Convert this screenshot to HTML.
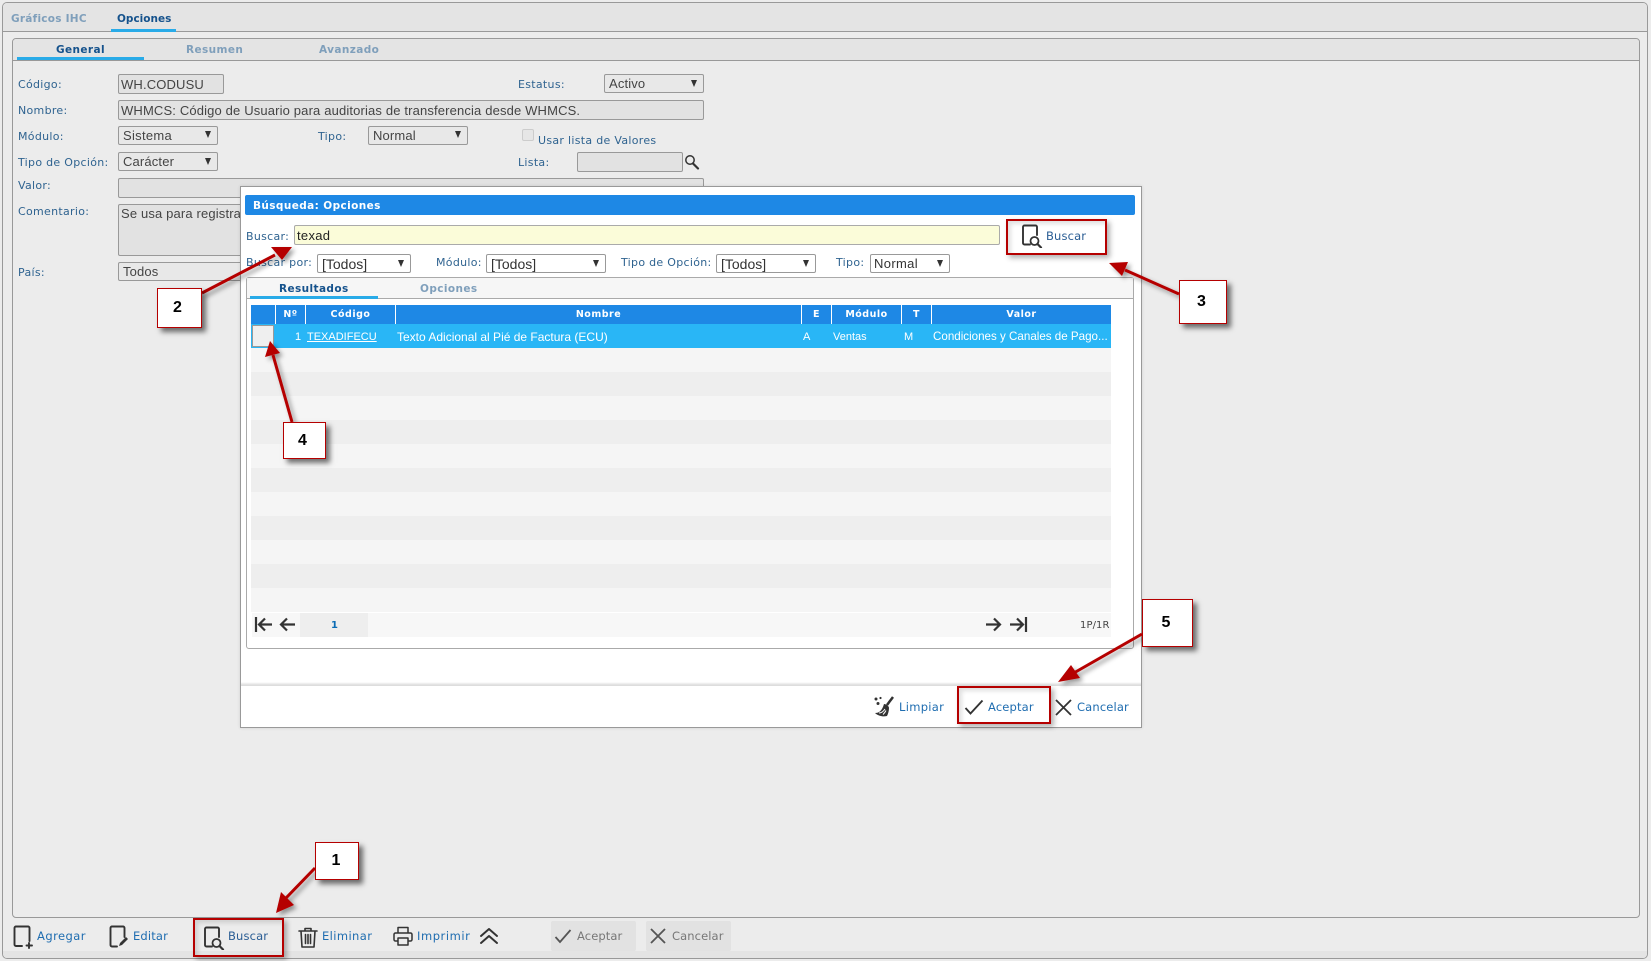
<!DOCTYPE html>
<html lang="es"><head><meta charset="utf-8"><title>Opciones</title>
<style>
html,body{margin:0;padding:0;width:1651px;height:961px;overflow:hidden;background:#ececec}
#r{position:relative;width:1651px;height:961px;overflow:hidden;font-family:"DejaVu Sans",sans-serif;font-size:11px;color:#2f6390}
#r div,#r span.t,#r svg{position:absolute;box-sizing:border-box}
.t{position:absolute;white-space:nowrap;line-height:16px;height:16px;margin-top:1px}
.l{color:#2f6390;font-size:11px;letter-spacing:.3px}
.v{font-family:"Liberation Sans",sans-serif;font-size:13px;color:#444;letter-spacing:.15px}
.vb{font-size:14px;letter-spacing:0}
.b{font-weight:bold;font-size:10.5px;letter-spacing:.4px}
.btn{color:#1f6db0;font-size:11.5px;letter-spacing:.15px;margin-top:0}
.dis{color:#777;font-size:11.5px;letter-spacing:.1px;margin-top:0}
.in{border:1px solid #999;border-radius:2px;background:#e2e2e2}
.sel{border:1px solid #999;border-radius:2px;background:#e8e8e8}
.sel.w{background:#fff}
.ar{width:0;height:0;border-left:3px solid transparent;border-right:3px solid transparent;border-top:7px solid #333}
.red{border:2px solid #b50000;box-shadow:3px 3px 5px rgba(0,0,0,.3),inset 3px 3px 4px rgba(0,0,0,.12)}
.call{background:#fff;border:1px solid #b50000;box-shadow:4px 4px 5px rgba(0,0,0,.55);font:bold 16px "Liberation Sans",sans-serif;color:#000;text-align:center}
.th{top:305px;height:19px;background:#1e88e5;color:#fff;font-weight:bold;font-size:9.5px;line-height:20px;text-align:center;letter-spacing:.5px}
.td{color:#fff;font-family:"Liberation Sans",sans-serif;font-size:11px}
svg .i{fill:none;stroke:#333;stroke-width:1.8;stroke-linecap:round;stroke-linejoin:round}
</style></head><body><div id="r">

<!-- outer panel -->
<div style="left:2px;top:2px;width:1646px;height:957px;border:1px solid #999;border-radius:5px;background:#ececec"></div>
<div style="left:3px;top:3px;width:1644px;height:29px;background:#e4e4e4;border-bottom:1px solid #999;border-radius:4px 4px 0 0"></div>
<div style="left:3px;top:951px;width:1644px;height:7px;background:#e4e4e4;border-radius:0 0 4px 4px"></div>
<span class="t b" style="left:11px;top:10px;color:#7f9fbb;letter-spacing:.25px">Gráficos IHC</span>
<span class="t b" style="left:117px;top:10px;color:#15528c;letter-spacing:0">Opciones</span>
<div style="left:111px;top:29px;width:65px;height:3px;background:#29abe8"></div>

<!-- inner panel -->
<div style="left:12px;top:38px;width:1628px;height:880px;border:1px solid #999;border-radius:4px;background:#ececec"></div>
<div style="left:13px;top:39px;width:1626px;height:22px;background:#e4e4e4;border-bottom:1px solid #999;border-radius:3px 3px 0 0"></div>
<span class="t b" style="left:56px;top:41px;color:#15528c">General</span>
<span class="t b" style="left:186px;top:41px;color:#7f9fbb">Resumen</span>
<span class="t b" style="left:319px;top:41px;color:#7f9fbb">Avanzado</span>
<div style="left:17px;top:57px;width:127px;height:3px;background:#29abe8"></div>

<span class="t l" style="left:18px;top:76px">Código:</span>
<div class="in" style="left:118px;top:74px;width:106px;height:20px"></div>
<span class="t v" style="left:121px;top:76px">WH.CODUSU</span>
<span class="t l" style="left:518px;top:76px">Estatus:</span>
<div class="sel" style="left:604px;top:74px;width:100px;height:19px"></div>
<span class="t v" style="left:609px;top:75px">Activo</span>
<div class="ar" style="left:691px;top:80px"></div>

<span class="t l" style="left:18px;top:102px">Nombre:</span>
<div class="in" style="left:118px;top:100px;width:586px;height:20px"></div>
<span class="t v" style="left:121px;top:102px">WHMCS: Código de Usuario para auditorias de transferencia desde WHMCS.</span>

<span class="t l" style="left:18px;top:128px">Módulo:</span>
<div class="sel" style="left:118px;top:126px;width:100px;height:19px"></div>
<span class="t v" style="left:123px;top:127px;letter-spacing:.3px">Sistema</span>
<div class="ar" style="left:205px;top:131px"></div>
<span class="t l" style="left:318px;top:128px">Tipo:</span>
<div class="sel" style="left:368px;top:126px;width:100px;height:19px"></div>
<span class="t v" style="left:373px;top:127px">Normal</span>
<div class="ar" style="left:455px;top:131px"></div>
<div style="left:522px;top:129px;width:12px;height:12px;border:1px solid #ccc;border-radius:2px;background:#e6e6e6"></div>
<span class="t l" style="left:538px;top:132px">Usar lista de Valores</span>

<span class="t l" style="left:18px;top:154px">Tipo de Opción:</span>
<div class="sel" style="left:118px;top:152px;width:100px;height:19px"></div>
<span class="t v" style="left:123px;top:153px">Carácter</span>
<div class="ar" style="left:205px;top:158px"></div>
<span class="t l" style="left:518px;top:154px">Lista:</span>
<div class="in" style="left:577px;top:152px;width:106px;height:20px"></div>
<svg style="left:684px;top:154px" width="16" height="16" viewBox="0 0 16 16"><circle cx="6" cy="6" r="4.2" class="i" style="stroke-width:1.5"/><path d="M9 9.5l5 5" class="i" style="stroke-width:2.2"/></svg>

<span class="t l" style="left:18px;top:177px">Valor:</span>
<div class="in" style="left:118px;top:178px;width:586px;height:20px"></div>
<span class="t l" style="left:18px;top:203px">Comentario:</span>
<div class="in" style="left:118px;top:204px;width:586px;height:52px"></div>
<span class="t v" style="left:121px;top:205px">Se usa para registrar</span>
<span class="t l" style="left:18px;top:264px">País:</span>
<div class="sel" style="left:118px;top:262px;width:300px;height:19px"></div>
<span class="t v" style="left:123px;top:263px">Todos</span>

<!-- bottom toolbar -->
<svg style="left:13px;top:925px" width="21" height="24" viewBox="0 0 21 24"><path class="i" d="M9 21H3a1.500 1.500 0 0 1-1.500-1.500V3A1.500 1.500 0 0 1 3 1.500h12A1.500 1.500 0 0 1 16.500 3v13M16 18v5M13.500 20.500h5.500" style="stroke-width:1.9"/></svg>
<span class="t btn" style="left:37px;top:928px;letter-spacing:.45px">Agregar</span>
<svg style="left:108px;top:925px" width="22" height="24" viewBox="0 0 22 24"><path class="i" d="M9 21.500H4a1.500 1.500 0 0 1-1.500-1.500V3A1.500 1.500 0 0 1 4 1.500h11A1.500 1.500 0 0 1 16.500 3v9" style="stroke-width:1.9"/><path d="M11 21l1-3 6-6 2 2-6 6z" fill="#333"/></svg>
<span class="t btn" style="left:133px;top:928px">Editar</span>
<div class="red" style="left:193px;top:918px;width:91px;height:39px"></div>
<svg style="left:203px;top:926px" width="22" height="24" viewBox="0 0 22 24"><path class="i" d="M9 20.500H3.500A1.500 1.500 0 0 1 2 19V3A1.500 1.500 0 0 1 3.500 1.500h11A1.500 1.500 0 0 1 16 3v8" style="stroke-width:1.9"/><circle class="i" cx="13.500" cy="17" r="4"/><path class="i" d="M16.500 20l3.500 3.500" style="stroke-width:2.2"/></svg>
<span class="t btn" style="left:228px;top:928px;color:#2a5d94">Buscar</span>
<svg style="left:298px;top:926px" width="20" height="23" viewBox="0 0 20 23"><path class="i" d="M1 5h18M7 5V2.500h6V5M3 5l1 16h12l1-16M7.500 8.500v9M10 8.500v9M12.500 8.500v9" style="stroke-width:1.6"/></svg>
<span class="t btn" style="left:322px;top:928px;letter-spacing:.4px">Eliminar</span>
<svg style="left:393px;top:926px" width="20" height="20" viewBox="0 0 20 20"><path class="i" d="M5 7V1.500h10V7M5 15H2.500A1.500 1.500 0 0 1 1 13.500V8.500A1.500 1.500 0 0 1 2.500 7h15A1.500 1.500 0 0 1 19 8.500v5a1.500 1.500 0 0 1-1.500 1.500H15M5 12h10v7H5z" style="stroke-width:1.5"/></svg>
<span class="t btn" style="left:417px;top:928px;letter-spacing:.55px">Imprimir</span>
<svg style="left:479px;top:927px" width="20" height="18" viewBox="0 0 20 18"><path class="i" d="M2 9l8-7 8 7M2 16l8-7 8 7" style="stroke-width:2"/></svg>
<div style="left:551px;top:921px;width:85px;height:30px;background:#e2e2e2;border-radius:2px"></div>
<svg style="left:554px;top:928px" width="18" height="16" viewBox="0 0 18 16"><path d="M1.500 9l4.500 5L16.500 2" fill="none" stroke="#555" stroke-width="1.800"/></svg>
<span class="t dis" style="left:577px;top:928px">Aceptar</span>
<div style="left:646px;top:921px;width:85px;height:30px;background:#e2e2e2;border-radius:2px"></div>
<svg style="left:650px;top:928px" width="16" height="16" viewBox="0 0 16 16"><path d="M1 1l14 14M15 1L1 15" fill="none" stroke="#555" stroke-width="1.800"/></svg>
<span class="t dis" style="left:672px;top:928px">Cancelar</span>

<!-- dialog -->
<div style="left:240px;top:186px;width:902px;height:542px;background:#fff;border:1px solid #999;box-shadow:0 0 3px rgba(0,0,0,.12)"></div>
<div style="left:245px;top:195px;width:890px;height:20px;background:#1e88e5;border-radius:2px"></div>
<span class="t" style="left:253px;top:197px;color:#fff;font-weight:bold;font-size:10.5px;letter-spacing:.4px">Búsqueda: Opciones</span>

<span class="t l" style="left:246px;top:228px">Buscar:</span>
<div style="left:294px;top:225px;width:706px;height:20px;background:#fbfcd9;border:1px solid #aaa;border-radius:2px"></div>
<span class="t v" style="left:297px;top:227px;color:#222;letter-spacing:.3px">texad</span>
<div class="red" style="left:1006px;top:219px;width:101px;height:36px"></div>
<svg style="left:1021px;top:224px" width="22" height="24" viewBox="0 0 22 24"><path class="i" d="M9 20.500H3.500A1.500 1.500 0 0 1 2 19V3A1.500 1.500 0 0 1 3.500 1.500h11A1.500 1.500 0 0 1 16 3v8" style="stroke-width:1.9"/><circle class="i" cx="13.500" cy="17" r="4"/><path class="i" d="M16.500 20l3.500 3.500" style="stroke-width:2.2"/></svg>
<span class="t btn" style="left:1046px;top:228px;color:#2a5d94">Buscar</span>

<span class="t l" style="left:246px;top:254px">Buscar por:</span>
<div class="sel w" style="left:317px;top:254px;width:94px;height:19px"></div>
<span class="t v vb" style="left:322px;top:255px;color:#333">[Todos]</span>
<div class="ar" style="left:398px;top:260px"></div>
<span class="t l" style="left:436px;top:254px">Módulo:</span>
<div class="sel w" style="left:486px;top:254px;width:120px;height:19px"></div>
<span class="t v vb" style="left:491px;top:255px;color:#333">[Todos]</span>
<div class="ar" style="left:593px;top:260px"></div>
<span class="t l" style="left:621px;top:254px">Tipo de Opción:</span>
<div class="sel w" style="left:716px;top:254px;width:100px;height:19px"></div>
<span class="t v vb" style="left:721px;top:255px;color:#333">[Todos]</span>
<div class="ar" style="left:803px;top:260px"></div>
<span class="t l" style="left:836px;top:254px">Tipo:</span>
<div class="sel w" style="left:870px;top:254px;width:80px;height:19px"></div>
<span class="t v" style="left:874px;top:255px;color:#333;letter-spacing:.35px">Normal</span>
<div class="ar" style="left:937px;top:260px"></div>

<!-- results panel -->
<div style="left:246px;top:277px;width:888px;height:372px;border:1px solid #aaa;border-radius:3px;background:#fff"></div>
<div style="left:247px;top:278px;width:886px;height:21px;background:#f6f6f6;border-bottom:1px solid #aaa"></div>
<span class="t b" style="left:279px;top:280px;color:#15528c">Resultados</span>
<span class="t b" style="left:420px;top:280px;color:#7f9fbb">Opciones</span>
<div style="left:250px;top:296px;width:128px;height:3px;background:#29abe8"></div>

<!-- table -->
<div class="th" style="left:251px;width:24px"></div>
<div class="th" style="left:276px;width:29px">Nº</div>
<div class="th" style="left:306px;width:89px">Código</div>
<div class="th" style="left:396px;width:405px">Nombre</div>
<div class="th" style="left:802px;width:29px">E</div>
<div class="th" style="left:832px;width:69px">Módulo</div>
<div class="th" style="left:902px;width:29px">T</div>
<div class="th" style="left:932px;width:179px">Valor</div>
<div style="left:251px;top:324px;width:860px;height:24px;background:#29b6f6"></div>
<div style="left:252px;top:325px;width:22px;height:22px;background:#efefef;border:1px solid #999"></div>
<span class="t td" style="left:295px;top:328px">1</span>
<span class="t td" style="left:307px;top:328px;text-decoration:underline">TEXADIFECU</span>
<span class="t td" style="left:397px;top:328px;font-size:12px">Texto Adicional al Pié de Factura (ECU)</span>
<span class="t td" style="left:803px;top:328px">A</span>
<span class="t td" style="left:833px;top:328px">Ventas</span>
<span class="t td" style="left:904px;top:328px">M</span>
<span class="t td" style="left:933px;top:328px;font-size:11.6px">Condiciones y Canales de Pago...</span>

<div style="left:251px;top:348px;width:860px;height:24px;background:#f5f5f5"></div>
<div style="left:251px;top:372px;width:860px;height:24px;background:#eee"></div>
<div style="left:251px;top:396px;width:860px;height:24px;background:#f5f5f5"></div>
<div style="left:251px;top:420px;width:860px;height:24px;background:#eee"></div>
<div style="left:251px;top:444px;width:860px;height:24px;background:#f5f5f5"></div>
<div style="left:251px;top:468px;width:860px;height:24px;background:#eee"></div>
<div style="left:251px;top:492px;width:860px;height:24px;background:#f5f5f5"></div>
<div style="left:251px;top:516px;width:860px;height:24px;background:#eee"></div>
<div style="left:251px;top:540px;width:860px;height:24px;background:#f5f5f5"></div>
<div style="left:251px;top:564px;width:860px;height:24px;background:#eee"></div>
<div style="left:251px;top:588px;width:860px;height:24px;background:#f5f5f5"></div>

<!-- pager -->
<div style="left:252px;top:613px;width:859px;height:24px;background:#f7f7f7"></div>
<div style="left:300px;top:613px;width:68px;height:24px;background:#eee"></div>
<span class="t" style="left:331px;top:617px;color:#0b6cb5;font-weight:bold;font-size:10px">1</span>
<svg style="left:254px;top:616px" width="20" height="18" viewBox="0 0 20 18"><path d="M2 1v15M18 8.500H5M11 2.500L5 8.500l6 6" fill="none" stroke="#333" stroke-width="2.200"/></svg>
<svg style="left:278px;top:616px" width="18" height="18" viewBox="0 0 18 18"><path d="M17 8.500H3M9 2.500L3 8.500l6 6" fill="none" stroke="#333" stroke-width="2.200"/></svg>
<svg style="left:985px;top:616px" width="18" height="18" viewBox="0 0 18 18"><path d="M1 8.500h14M9 2.500l6 6-6 6" fill="none" stroke="#333" stroke-width="2.200"/></svg>
<svg style="left:1008px;top:616px" width="20" height="18" viewBox="0 0 20 18"><path d="M18 1v15M2 8.500h13M9 2.500l6 6-6 6" fill="none" stroke="#333" stroke-width="2.200"/></svg>
<span class="t" style="left:1080px;top:617px;color:#444;font-size:10px;letter-spacing:.1px">1P/1R</span>

<!-- footer -->
<div style="left:241px;top:682px;width:900px;height:3px;background:linear-gradient(#fff,#ddd)"></div>
<div style="left:241px;top:685px;width:900px;height:1px;background:#ddd"></div>
<svg style="left:873px;top:696px" width="22" height="22" viewBox="0 0 22 22"><circle cx="3" cy="3" r="1.500" fill="#333"/><circle cx="7.500" cy="2" r="1.100" fill="#333"/><circle cx="5" cy="7.500" r="1.500" fill="#333"/><path d="M20 1l-6 8" stroke="#333" stroke-width="2.500" fill="none"/><path d="M11 8c2 0 5 2 5 4 0 3-1 6-2 8-4 1-9 0-12-3 4 0 7-2 9-9z" fill="#333"/><path d="M6 17c2 0 4-1 6-4M10 18.500c1-1 2-2 3-4" stroke="#fff" stroke-width="1" fill="none"/></svg>
<span class="t btn" style="left:899px;top:699px;letter-spacing:.3px">Limpiar</span>
<div class="red" style="left:957px;top:686px;width:94px;height:38px"></div>
<svg style="left:964px;top:699px" width="20" height="16" viewBox="0 0 20 16"><path d="M1.500 9l5 5.500L18.500 1.500" fill="none" stroke="#333" stroke-width="1.900"/></svg>
<span class="t btn" style="left:988px;top:699px">Aceptar</span>
<svg style="left:1055px;top:699px" width="17" height="17" viewBox="0 0 17 17"><path d="M1 1l15 15M16 1L1 16" fill="none" stroke="#333" stroke-width="1.800"/></svg>
<span class="t btn" style="left:1077px;top:699px">Cancelar</span>

<!-- arrows -->
<svg style="left:0;top:0;overflow:visible" width="1651" height="961" viewBox="0 0 1651 961">
<defs><filter id="s" x="-30%" y="-30%" width="170%" height="170%"><feDropShadow dx="3" dy="3" stdDeviation="2.500" flood-color="#000" flood-opacity=".4"/></filter></defs>
<g filter="url(#s)" fill="#b50000" stroke="#b50000">
<path d="M315 868L286 898" stroke-width="3" fill="none"/><path d="M276 913l5-21 13 13z" stroke="none"/>
<path d="M202 293L275 255" stroke-width="3" fill="none"/><path d="M292 247l-21 0 11 13z" stroke="none"/>
<path d="M1179 294L1125 270" stroke-width="3" fill="none"/><path d="M1109 263l19-1-6 14z" stroke="none"/>
<path d="M292 422L273 355" stroke-width="3" fill="none"/><path d="M270 341l-5 16 15-4z" stroke="none"/>
<path d="M1142 634L1072 674" stroke-width="3" fill="none"/><path d="M1058 682l13-17 9 13z" stroke="none"/>
</g></svg>

<div class="call" style="left:315px;top:842px;width:44px;height:38px;line-height:35px;padding-right:2px">1</div>
<div class="call" style="left:157px;top:288px;width:45px;height:40px;line-height:37px;padding-right:4px">2</div>
<div class="call" style="left:1179px;top:280px;width:48px;height:44px;line-height:42px;padding-right:3px">3</div>
<div class="call" style="left:283px;top:422px;width:43px;height:37px;line-height:36px;padding-right:4px">4</div>
<div class="call" style="left:1142px;top:599px;width:51px;height:48px;line-height:46px;padding-right:3px">5</div>

</div></body></html>
